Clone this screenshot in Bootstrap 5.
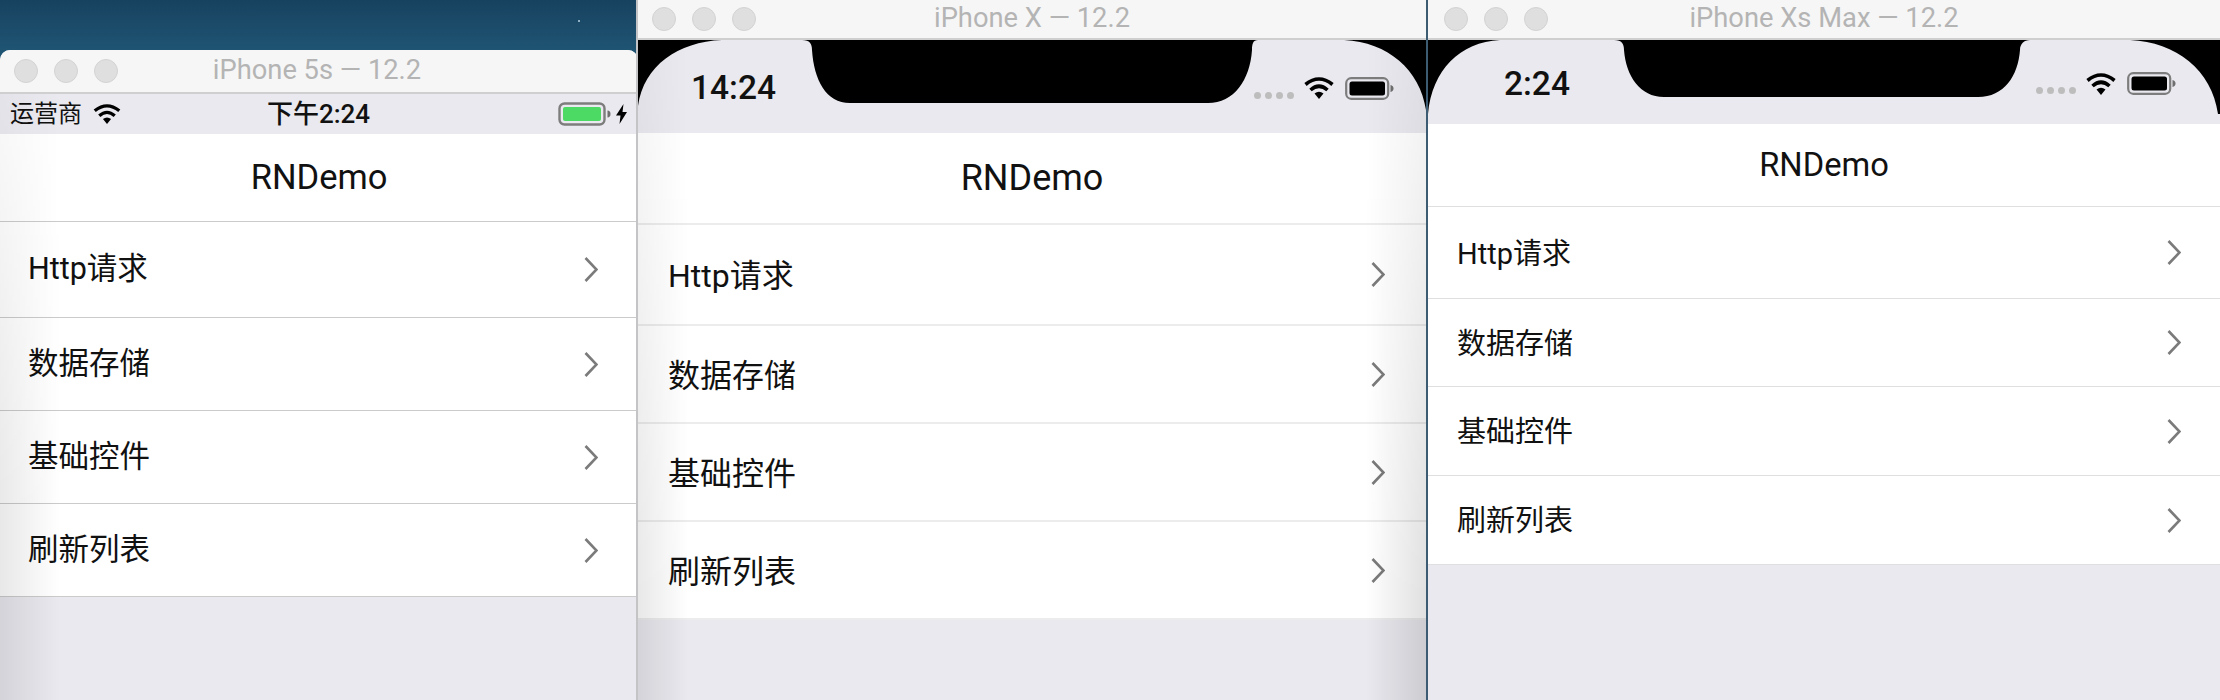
<!doctype html>
<html lang="zh">
<head>
<meta charset="utf-8">
<title>RNDemo</title>
<link href="https://cdn.jsdelivr.net/npm/bootstrap@5.3.0/dist/css/bootstrap.min.css" rel="stylesheet">
<style>
html,body{height:700px;overflow:hidden}
body{background:linear-gradient(#17425f,#1f5473 50px);font-family:Roboto,"Noto Sans CJK SC",sans-serif;color:#111}
.desk{height:700px}
.sim{height:700px;overflow:hidden;position:relative;background:#e9e9ef}
.sim-a{width:638px;margin-top:50px;height:650px;border-radius:10px 10px 0 0;z-index:1}
.sim-b{width:790px;margin-left:-2px;border-left:2px solid #c4c4c6;z-index:2}
.sim-c{flex:1;border-left:2px solid #3b5c72;z-index:3}
.desk-spark{position:absolute;left:578px;top:20px;width:2px;height:2px;background:#8fb0c4;z-index:0}
.titlebar{display:grid;grid-template-columns:1fr auto 1fr;align-items:center;background:#f6f6f6;border-bottom:2px solid #cfcfcf;font-size:27.3px;color:#b4b4b4;line-height:1}
.sim-a .titlebar{height:44px;padding-right:4px}
.sim-b .titlebar,.sim-c .titlebar{height:40px}
.sim-a .lights{padding-left:14px}
.sim-b .lights{padding-left:14px}
.sim-c .lights{padding-left:16px}
.lamp{width:24px;height:24px;border-radius:50%;background:#dfdfdf;border:1px solid #d3d3d3}
.stat-a{height:40px;font-size:24px;padding:0 11px 0 10px;color:#111;line-height:1}
.stat-a .lft,.stat-a .rgt{flex:1 1 0}
.stat-a .lft svg{margin-left:11px}
.stat-a .now{font-size:26px;font-weight:500}
.notched{position:relative}
.notched svg.shape{position:absolute;left:0;top:0}
.notched .inner{position:relative}
.stat-b{height:93px}
.stat-c{height:84px}
.stat-b .inner{height:93px;padding:3px 31px 0 53px}
.stat-c .inner{height:84px;padding:3px 43px 0 76px}
.clock{font-weight:500;line-height:1;font-size:33.5px}
.dots{margin-top:14px;margin-right:10px}
.dots i{display:block;width:7px;height:7px;border-radius:50%;background:#bdbdbd}
.cell-pow{margin-left:11px}
.headbar{display:flex;align-items:center;justify-content:center;background:#fff;line-height:1}
.sim-a .headbar{height:88px;font-size:34.5px;border-bottom:1px solid #cbcbcb}
.sim-b .headbar{height:92px;font-size:36px;border-bottom:2px solid #ececec}
.sim-c .headbar{height:83px;font-size:32.7px;border-bottom:1px solid #dfdfe1}
.menu-list{--bs-list-group-bg:#fff;--bs-list-group-item-padding-x:0;--bs-list-group-item-padding-y:0;--bs-list-group-color:#111;border-radius:0}
.menu-list .list-group-item{line-height:1}
.sim-a .menu-list .list-group-item{height:93px;font-size:30.5px;padding:0 40px 0 28px;border-bottom:1px solid #cbcbcb}
.sim-a .menu-list .list-group-item:first-child{height:96px}
.sim-b .menu-list .list-group-item{height:98px;font-size:32px;padding:0 41px 0 30px;border-bottom:2px solid #ececec}
.sim-b .menu-list .list-group-item:first-child{height:101px}
.sim-b .menu-list span,.sim-c .menu-list span{margin-top:3px}
.sim-c .menu-list .list-group-item{height:89px;font-size:29px;padding:0 39px 0 29px;border-bottom:1px solid #dfdfe1}
.sim-c .menu-list .list-group-item:first-child{height:92px}
.sim-c .menu-list .list-group-item:nth-child(2){height:88px}
.chev{width:14px;height:25px;fill:none;stroke:#7b7b7b;stroke-width:2.6}
.sim-a::after,.sim-b::after{content:"";position:absolute;left:0;right:0;bottom:0;pointer-events:none}
.sim-a::after{top:44px;background:linear-gradient(to right,rgba(0,0,0,.09),transparent 60px);-webkit-mask-image:linear-gradient(to bottom,rgba(0,0,0,.25),#000 70%);mask-image:linear-gradient(to bottom,rgba(0,0,0,.25),#000 70%)}
.sim-b::after{top:40px;background:linear-gradient(to right,rgba(0,0,0,.09),transparent 50px),linear-gradient(to left,rgba(0,0,0,.12),transparent 60px);-webkit-mask-image:linear-gradient(to bottom,rgba(0,0,0,.3),#000 85%);mask-image:linear-gradient(to bottom,rgba(0,0,0,.3),#000 85%)}
</style>
</head>
<body>
<svg width="0" height="0" class="d-block position-absolute">
  <defs>
    <symbol id="wifi" viewBox="0 0 30 22">
      <path d="M1.5 7.5Q15-3.5 28.500 7.500M6.500 13Q15 5.500 23.500 13" fill="none" stroke="#000" stroke-width="3.6"/>
      <path d="M10.500 16.500Q15 13 19.500 16.500L15 22Z" fill="#000"/>
    </symbol>
  </defs>
</svg>
<div class="desk-spark"></div>
<div class="desk d-flex align-items-start">

  <section class="sim sim-a">
    <div class="titlebar">
      <div class="lights d-flex gap-3"><span class="lamp"></span><span class="lamp"></span><span class="lamp"></span></div>
      <div>iPhone 5s — 12.2</div><div></div>
    </div>
    <div class="stat-a d-flex align-items-center">
      <div class="lft d-flex align-items-center"><span>运营商</span><svg width="28" height="20"><use href="#wifi"/></svg></div>
      <div class="now">下午2:24</div>
      <div class="rgt d-flex align-items-center justify-content-end">
        <svg width="54" height="24" viewBox="0 0 54 24"><rect x="1.500" y="1.500" width="45" height="21" rx="5" fill="none" stroke="#7d7d7d" stroke-width="2.400"/><rect x="5" y="5" width="38" height="14" rx="2" fill="#4cd964"/><path d="M49.500 8.500c2 0 3 1.500 3 3.500s-1 3.500-3 3.500z" fill="#6f6f6f"/></svg>
        <svg width="11" height="20" viewBox="0 0 11 20" class="ms-1"><path d="M7.500 0L0 11.500h4.500L3.500 20 11 8H6.500z" fill="#000"/></svg>
      </div>
    </div>
    <div class="headbar"><span>RNDemo</span></div>
    <ul class="list-group list-group-flush menu-list">
      <li class="list-group-item d-flex justify-content-between align-items-center"><span>Http请求</span><svg class="chev" viewBox="0 0 14 25"><path d="M1.500 1l11 11.500-11 11.500"/></svg></li>
      <li class="list-group-item d-flex justify-content-between align-items-center"><span>数据存储</span><svg class="chev" viewBox="0 0 14 25"><path d="M1.500 1l11 11.500-11 11.500"/></svg></li>
      <li class="list-group-item d-flex justify-content-between align-items-center"><span>基础控件</span><svg class="chev" viewBox="0 0 14 25"><path d="M1.500 1l11 11.500-11 11.500"/></svg></li>
      <li class="list-group-item d-flex justify-content-between align-items-center"><span>刷新列表</span><svg class="chev" viewBox="0 0 14 25"><path d="M1.500 1l11 11.500-11 11.500"/></svg></li>
    </ul>
  </section>

  <section class="sim sim-b">
    <div class="titlebar">
      <div class="lights d-flex gap-3"><span class="lamp"></span><span class="lamp"></span><span class="lamp"></span></div>
      <div>iPhone X — 12.2</div><div></div>
    </div>
    <div class="notched stat-b">
      <svg class="shape" width="788" height="93" viewBox="0 0 788 93"><path d="M0 0H84C40 2 6 25 0 66ZM788 0H706C750 2 782 30 788 70ZM164 0H620C615 0 614 4 614 10C612 40 596 63 570 63H212C188 63 176 40 174 10C174 4 172 0 164 0Z" fill="#000"/></svg>
      <div class="inner d-flex align-items-center justify-content-between">
        <div class="clock">14:24</div>
        <div class="d-flex align-items-center">
          <div class="dots d-flex gap-1"><i></i><i></i><i></i><i></i></div>
          <svg width="30" height="22"><use href="#wifi"/></svg>
          <svg width="50" height="23" viewBox="0 0 50 23" class="cell-pow"><rect x="1.200" y="1.200" width="42" height="20.600" rx="5" fill="none" stroke="#7d7d7d" stroke-width="2.200"/><rect x="4.500" y="4.500" width="35.500" height="14" rx="2.500" fill="#000"/><path d="M45.500 8c2 .4 3 1.800 3 3.500s-1 3.100-3 3.500z" fill="#6f6f6f"/></svg>
        </div>
      </div>
    </div>
    <div class="headbar"><span>RNDemo</span></div>
    <ul class="list-group list-group-flush menu-list">
      <li class="list-group-item d-flex justify-content-between align-items-center"><span>Http请求</span><svg class="chev" viewBox="0 0 14 25"><path d="M1.500 1l11 11.500-11 11.500"/></svg></li>
      <li class="list-group-item d-flex justify-content-between align-items-center"><span>数据存储</span><svg class="chev" viewBox="0 0 14 25"><path d="M1.500 1l11 11.500-11 11.500"/></svg></li>
      <li class="list-group-item d-flex justify-content-between align-items-center"><span>基础控件</span><svg class="chev" viewBox="0 0 14 25"><path d="M1.500 1l11 11.500-11 11.500"/></svg></li>
      <li class="list-group-item d-flex justify-content-between align-items-center"><span>刷新列表</span><svg class="chev" viewBox="0 0 14 25"><path d="M1.500 1l11 11.500-11 11.500"/></svg></li>
    </ul>
  </section>

  <section class="sim sim-c">
    <div class="titlebar">
      <div class="lights d-flex gap-3"><span class="lamp"></span><span class="lamp"></span><span class="lamp"></span></div>
      <div>iPhone Xs Max — 12.2</div><div></div>
    </div>
    <div class="notched stat-c">
      <svg class="shape" width="792" height="84" viewBox="0 0 792 84"><path d="M0 0H72C32 2 4 30 0 74ZM792 0H702C748 2 784 30 790 74L792 74ZM186 0H602C596 0 592 4 592 10C590 36 576 57 550 57H236C212 57 198 36 196 10C196 4 194 0 186 0Z" fill="#000"/></svg>
      <div class="inner d-flex align-items-center justify-content-between">
        <div class="clock">2:24</div>
        <div class="d-flex align-items-center">
          <div class="dots d-flex gap-1"><i></i><i></i><i></i><i></i></div>
          <svg width="30" height="22"><use href="#wifi"/></svg>
          <svg width="50" height="23" viewBox="0 0 50 23" class="cell-pow"><rect x="1.200" y="1.200" width="42" height="20.600" rx="5" fill="none" stroke="#7d7d7d" stroke-width="2.200"/><rect x="4.500" y="4.500" width="35.500" height="14" rx="2.500" fill="#000"/><path d="M45.500 8c2 .4 3 1.800 3 3.500s-1 3.100-3 3.500z" fill="#6f6f6f"/></svg>
        </div>
      </div>
    </div>
    <div class="headbar"><span>RNDemo</span></div>
    <ul class="list-group list-group-flush menu-list">
      <li class="list-group-item d-flex justify-content-between align-items-center"><span>Http请求</span><svg class="chev" viewBox="0 0 14 25"><path d="M1.500 1l11 11.500-11 11.500"/></svg></li>
      <li class="list-group-item d-flex justify-content-between align-items-center"><span>数据存储</span><svg class="chev" viewBox="0 0 14 25"><path d="M1.500 1l11 11.500-11 11.500"/></svg></li>
      <li class="list-group-item d-flex justify-content-between align-items-center"><span>基础控件</span><svg class="chev" viewBox="0 0 14 25"><path d="M1.500 1l11 11.500-11 11.500"/></svg></li>
      <li class="list-group-item d-flex justify-content-between align-items-center"><span>刷新列表</span><svg class="chev" viewBox="0 0 14 25"><path d="M1.500 1l11 11.500-11 11.500"/></svg></li>
    </ul>
  </section>
</div>
<script src="https://cdn.jsdelivr.net/npm/bootstrap@5.3.0/dist/js/bootstrap.bundle.min.js"></script>
</body>
</html>
